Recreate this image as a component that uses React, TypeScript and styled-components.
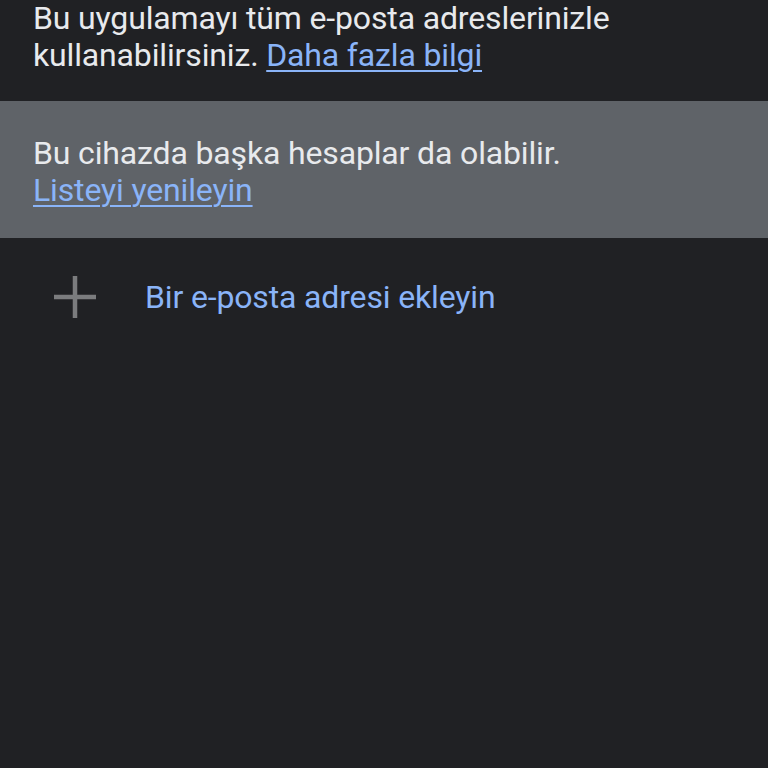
import { createGlobalStyle } from 'styled-components'
import styled from 'styled-components'

const GlobalStyle = createGlobalStyle`
  html, body {
    margin: 0;
    padding: 0;
    background: #202124;
  }
  body {
    font-family: Roboto, 'Noto Sans', sans-serif;
    -webkit-font-smoothing: antialiased;
  }
`

const StyledPage = styled.div`
  width: 768px;
  height: 768px;
  overflow: hidden;
  background: #202124;
  display: flex;
  flex-direction: column;
`

const StyledInfoBlock = styled.div<{ $tinted?: boolean }>`
  padding: ${(p) => (p.$tinted ? '34px 33px 29px' : '0 33px 27px')};
  background: ${(p) => (p.$tinted ? '#5f6368' : 'transparent')};
  color: #e8eaed;
  font-size: 32px;
  line-height: 37px;
  letter-spacing: -0.15px;
`

const StyledLink = styled.a`
  color: #8ab4f8;
  text-decoration: underline;
  text-underline-offset: 4px;
  text-decoration-thickness: 1.5px;
  cursor: pointer;
`

const StyledAddRow = styled.div`
  display: flex;
  align-items: center;
  gap: 48px;
  padding: 37px 0 0 53px;
`

const StyledPlusIcon = styled.svg`
  width: 44px;
  height: 44px;
  flex-shrink: 0;
`

const StyledAddLabel = styled.span`
  color: #8ab4f8;
  font-size: 32px;
  line-height: 37px;
  letter-spacing: -0.15px;
`

export default function App() {
  return (
    <StyledPage>
      <GlobalStyle />
      <StyledInfoBlock>
        Bu uygulamayı tüm e-posta adreslerinizle
        <br />
        kullanabilirsiniz. <StyledLink>Daha fazla bilgi</StyledLink>
      </StyledInfoBlock>
      <StyledInfoBlock $tinted>
        Bu cihazda başka hesaplar da olabilir.
        <br />
        <StyledLink>Listeyi yenileyin</StyledLink>
      </StyledInfoBlock>
      <StyledAddRow>
        <StyledPlusIcon viewBox="0 0 44 44">
          <path d="M22 1v42M1 22h42" stroke="#7b7c7e" strokeWidth="4.5" />
        </StyledPlusIcon>
        <StyledAddLabel>Bir e-posta adresi ekleyin</StyledAddLabel>
      </StyledAddRow>
    </StyledPage>
  )
}
